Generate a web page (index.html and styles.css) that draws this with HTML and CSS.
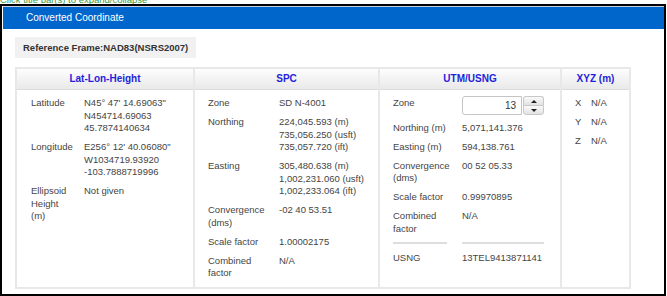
FILE: index.html
```html
<!DOCTYPE html>
<html lang="en">

<head>
    <meta charset="UTF-8">
    <meta name="viewport" content="width=device-width, initial-scale=1.0">
    <title>Converted Coordinate</title>
    <link rel="stylesheet" href="styles.css">
</head>

<body>
    <div class="hint"><span>Click title bar(s) to expand/collapse</span></div>

    <div class="panel">
        <div class="panel-title">Converted Coordinate</div>

        <div class="panel-body">
            <div class="ref-frame">Reference Frame:NAD83(NSRS2007)</div>

            <div class="coords">
                <!-- Geodetic -->
                <div class="col col-llh">
                    <div class="col-head">Lat-Lon-Height</div>
                    <div class="col-body">
                        <div class="row">
                            <div class="lbl">Latitude</div>
                            <div class="val">N45° 47' 14.69063"<br>N454714.69063<br>45.7874140634</div>
                        </div>
                        <div class="row">
                            <div class="lbl">Longitude</div>
                            <div class="val">E256° 12' 40.06080"<br>W1034719.93920<br>-103.7888719996</div>
                        </div>
                        <div class="row row-eh">
                            <div class="lbl">Ellipsoid Height (m)</div>
                            <div class="val">Not given</div>
                        </div>
                    </div>
                </div>

                <!-- State plane -->
                <div class="col col-spc">
                    <div class="col-head">SPC</div>
                    <div class="col-body">
                        <div class="row">
                            <div class="lbl">Zone</div>
                            <div class="val">SD N-4001</div>
                        </div>
                        <div class="row">
                            <div class="lbl">Northing</div>
                            <div class="val">224,045.593 (m)<br>735,056.250 (usft)<br>735,057.720 (ift)</div>
                        </div>
                        <div class="row">
                            <div class="lbl">Easting</div>
                            <div class="val">305,480.638 (m)<br>1,002,231.060 (usft)<br>1,002,233.064 (ift)</div>
                        </div>
                        <div class="row">
                            <div class="lbl">Convergence (dms)</div>
                            <div class="val">-02 40 53.51</div>
                        </div>
                        <div class="row">
                            <div class="lbl">Scale factor</div>
                            <div class="val">1.00002175</div>
                        </div>
                        <div class="row">
                            <div class="lbl">Combined factor</div>
                            <div class="val">N/A</div>
                        </div>
                    </div>
                </div>

                <!-- UTM / USNG -->
                <div class="col col-utm">
                    <div class="col-head">UTM/USNG</div>
                    <div class="col-body">
                        <div class="row">
                            <div class="lbl">Zone</div>
                            <div class="val">
                                <div class="spinner">
                                    <div class="spinner-input">13</div>
                                    <div class="spinner-btns">
                                        <span class="spin-up"></span>
                                        <span class="spin-down"></span>
                                    </div>
                                </div>
                            </div>
                        </div>
                        <div class="row">
                            <div class="lbl">Northing (m)</div>
                            <div class="val">5,071,141.376</div>
                        </div>
                        <div class="row">
                            <div class="lbl">Easting (m)</div>
                            <div class="val">594,138.761</div>
                        </div>
                        <div class="row">
                            <div class="lbl">Convergence (dms)</div>
                            <div class="val">00 52 05.33</div>
                        </div>
                        <div class="row">
                            <div class="lbl">Scale factor</div>
                            <div class="val">0.99970895</div>
                        </div>
                        <div class="row">
                            <div class="lbl">Combined factor</div>
                            <div class="val">N/A</div>
                        </div>
                        <div class="row row-sep">
                            <div class="lbl"><hr></div>
                            <div class="val"><hr></div>
                        </div>
                        <div class="row">
                            <div class="lbl">USNG</div>
                            <div class="val">13TEL9413871141</div>
                        </div>
                    </div>
                </div>

                <!-- Cartesian -->
                <div class="col col-xyz">
                    <div class="col-head">XYZ (m)</div>
                    <div class="col-body">
                        <div class="row">
                            <div class="lbl">X</div>
                            <div class="val">N/A</div>
                        </div>
                        <div class="row">
                            <div class="lbl">Y</div>
                            <div class="val">N/A</div>
                        </div>
                        <div class="row">
                            <div class="lbl">Z</div>
                            <div class="val">N/A</div>
                        </div>
                    </div>
                </div>
            </div>
        </div>
    </div>
</body>

</html>
```

FILE: styles.css
```css
* {
    box-sizing: border-box;
}

body {
    margin: 0;
    background-color: #fff;
    font-family: "Liberation Sans", Arial, sans-serif;
    font-size: 9.5px;
    color: #454545;
}

/* cut-off hint line above the panel */
.hint {
    height: 4px;
    overflow: hidden;
    color: #3a9a3a;
}

.hint span {
    display: block;
    margin-top: -6px;
    line-height: 12px;
}

.panel {
    width: 666px;
    height: 292px;
    border: 2px solid #000;
}

.panel-title {
    margin-left: 1px;
    height: 23px;
    border-top: 1px solid #c9d3de;
    background-color: #0066cc;
    color: #fff;
    font-size: 10px;
    line-height: 22px;
    padding-left: 23px;
}

.panel-body {
    padding: 8px 0 0 13px;
}

.ref-frame {
    display: inline-block;
    height: 21px;
    padding: 0 8px;
    background-color: #f1f1f1;
    color: #333;
    font-weight: bold;
    line-height: 21px;
}

.coords {
    display: flex;
    width: 616px;
    height: 222px;
    margin-top: 9px;
    border: 2px solid #e8e8e8;
}

.col {
    display: flex;
    flex-direction: column;
    border-left: 2px solid #e8e8e8;
}

.col-llh {
    width: 176px;
    border-left: none;
}

.col-spc {
    width: 185px;
}

.col-utm {
    width: 182px;
}

.col-xyz {
    flex: 1;
}

.col-head {
    height: 21px;
    border-bottom: 1px solid #dcdcdc;
    background: linear-gradient(#fdfdfd, #e9e9e9);
    color: #1f1fdc;
    font-size: 10px;
    font-weight: bold;
    line-height: 20px;
    text-align: center;
}

.col-body {
    padding: 7px 6px 0 13px;
    line-height: 12.5px;
}

.col-llh .col-body {
    padding-left: 14px;
}

.row {
    display: grid;
    grid-template-columns: 71px 1fr;
    margin-bottom: 6.5px;
}

.col-llh .row {
    grid-template-columns: 53px 1fr;
}

.col-llh .lbl {
    padding-right: 11px;
}

.col-llh .row-eh {
    margin-top: 2px;
}

.col-utm .row {
    grid-template-columns: 69px 1fr;
}

.col-xyz .row {
    grid-template-columns: 16px 1fr;
}

.lbl {
    padding-right: 6px;
}

.row-sep {
    margin: 0 0 8px;
}

.row-sep hr {
    margin: 0;
    border: none;
    height: 2px;
    background-color: #dedede;
}

.row-sep .lbl hr {
    width: 54px;
}

.row-sep .val hr {
    width: 82px;
}

/* zone number spinner */
.spinner {
    display: flex;
    height: 19px;
    margin-top: -1px;
}

.spinner-input {
    width: 60px;
    border: 1px solid #c4c4c4;
    border-radius: 3px 0 0 3px;
    background-color: #fff;
    color: #333;
    font-size: 10px;
    line-height: 17px;
    text-align: right;
    padding-right: 5px;
}

.spinner-btns {
    display: flex;
    flex-direction: column;
    width: 21px;
    margin-left: 1px;
}

.spinner-btns span {
    flex: 1;
    position: relative;
    border: 1px solid #c8c8c8;
    background: linear-gradient(#fafafa, #e2e2e2);
}

.spin-up {
    border-radius: 3px 3px 0 0;
    border-bottom: none !important;
}

.spin-down {
    border-radius: 0 0 3px 3px;
}

.spinner-btns span::after {
    content: "";
    position: absolute;
    left: 7px;
    top: 3px;
    border-left: 3px solid transparent;
    border-right: 3px solid transparent;
}

.spin-up::after {
    border-bottom: 3px solid #222;
}

.spin-down::after {
    border-top: 3px solid #222;
}
```
